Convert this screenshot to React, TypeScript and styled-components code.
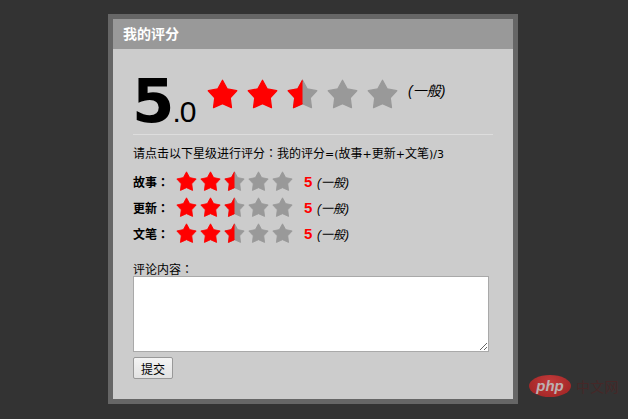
import React from "react";
import styled, { createGlobalStyle } from "styled-components";

const Global = createGlobalStyle`
  html, body { margin: 0; padding: 0; background: #333; height: 100%; overflow: hidden; }
  body { font-family: "Liberation Sans", "Noto Sans CJK SC", sans-serif; font-size: 12px; color: #000; }
`;
const Page = styled.div`
  width: 628px; height: 419px; padding-top: 14px; box-sizing: border-box; position: relative; overflow: hidden;
`;
const Dialog = styled.section`
  width: 400px; height: 380px; margin-left: 108px; border: 5px solid #666; background: #ccc;
`;
const Header = styled.header`
  height: 30px; background: #999; color: #fff; font-weight: 700; font-size: 14px; line-height: 30px; padding-left: 10px;
`;
const Body = styled.div`
  padding: 0 20px; display: flex; flex-direction: column;
`;
const Summary = styled.div`
  height: 86px; box-sizing: border-box; display: flex; align-items: flex-start; border-bottom: 1px solid #ddd;
`;
const Score = styled.div`
  width: 74px; padding-top: 18px; line-height: 68px; white-space: nowrap;
`;
const ScoreMain = styled.span`
  font-family: "DejaVu Sans", sans-serif; font-weight: 700; font-size: 61px; letter-spacing: -2px; margin-left: -1px;
`;
const ScoreFrac = styled.span`
  font-size: 30px; letter-spacing: -1px;
`;
const BigStars = styled.div`
  margin-top: 30px; display: flex; gap: 9px;
`;
const StarIcon = styled.svg<{ $size: number }>`
  width: ${(p) => p.$size}px; height: ${(p) => p.$size}px; display: block; flex: none; overflow: visible;
`;
const BigLabel = styled.em`
  margin: 34px 0 0 10px; line-height: 16px; font-size: 14px;
`;
const Hint = styled.p`
  margin: 0; padding-top: 11px; line-height: 17px; height: 28px; box-sizing: border-box; white-space: nowrap;
`;
const Colon = styled.span`
  font-family: "Noto Sans CJK TC", sans-serif; line-height: 1;
`;
const Sym = styled.span`
  font-family: "DejaVu Sans", sans-serif; font-size: 11px; line-height: 1;
`;
const Rows = styled.div`
  margin-top: 5px; display: flex; flex-direction: column;
`;
const Row = styled.div`
  height: 26px; display: flex; align-items: center;
`;
const RowName = styled.strong`
  width: 43px; flex: none; line-height: 14px; padding-top: 4px;
`;
const RowStars = styled.div`
  display: flex; gap: 3px; width: 124px;
`;
const RowNum = styled.strong`
  color: #f00; font-size: 15px; width: 13px; margin-left: 4px;
`;
const RowLabel = styled.em`
  font-size: 12px;
`;
const CommentLabel = styled.label`
  display: block; margin-top: 17px; line-height: 11px; padding-top: 0;
`;
const Area = styled.textarea`
  display: block; width: 356px; height: 76px; box-sizing: border-box; margin: 0; border: 1px solid #a9a9a9; background: #fff; padding: 2px;
`;
const Submit = styled.button`
  display: block; margin-top: 5px; width: 40px; height: 22px; padding: 0; box-sizing: border-box;
  border: 1px solid #999; border-radius: 2px; background: linear-gradient(#f4f4f4, #e2e2e2);
  font: 12px "Liberation Sans", "Noto Sans CJK SC", sans-serif; color: #000;
`;
const Mark = styled.div`
  position: absolute; left: 529px; top: 375px; display: flex; align-items: center;
`;
const Oval = styled.div`
  width: 42px; height: 22px; border-radius: 50%; background: radial-gradient(ellipse at 50% 30%, #c23a3a, #9c2222);
  color: #bcb0b0; font: italic 700 15px/21px "Liberation Sans", sans-serif; text-align: center;
`;
const MarkCn = styled.span`
  margin-left: 5px; font-size: 14px; letter-spacing: 0.2px; color: #452828; font-family: "Noto Sans CJK SC", sans-serif;
`;

const PTS = "50,4 65,31.5 96,37.8 75,61 79,92.5 50,79.5 21,92.5 25,61 4,37.8 35,31.5";
const COLON = "\uFF1A";

function Star({ size, fill }: { size: number; fill: "on" | "off" | "half" }) {
  const id = React.useId();
  const shape = (color: string, clip?: string) => (
    <polygon points={PTS} fill={color} stroke={color} strokeWidth="4" strokeLinejoin="round" clipPath={clip} />
  );
  if (fill === "half") {
    return (
      <StarIcon $size={size} viewBox="0 0 100 100">
        <defs>
          <clipPath id={id}><rect x="-5" y="-5" width="55" height="110" /></clipPath>
        </defs>
        {shape("#999")}
        {shape("#f00", `url(#${id})`)}
      </StarIcon>
    );
  }
  return (
    <StarIcon $size={size} viewBox="0 0 100 100">
      {shape(fill === "on" ? "#f00" : "#999")}
    </StarIcon>
  );
}

const FILLS = ["on", "on", "half", "off", "off"] as const;
const RATINGS = ["故事", "更新", "文笔"];

export default function App() {
  return (
    <Page>
      <Global />
      <Dialog>
        <Header>我的评分</Header>
        <Body>
          <Summary>
            <Score>
              <ScoreMain>5</ScoreMain>
              <ScoreFrac>.0</ScoreFrac>
            </Score>
            <BigStars>
              {FILLS.map((f, i) => <Star key={i} size={31} fill={f} />)}
            </BigStars>
            <BigLabel>(一般)</BigLabel>
          </Summary>
          <Hint>
            请点击以下星级进行评分<Colon>{COLON}</Colon>我的评分<Sym>=(</Sym>故事<Sym>+</Sym>更新<Sym>+</Sym>文笔<Sym>)/3</Sym>
          </Hint>
          <Rows>
            {RATINGS.map((name) => (
              <Row key={name}>
                <RowName>{name}<Colon>{COLON}</Colon></RowName>
                <RowStars>
                  {FILLS.map((f, i) => <Star key={i} size={21} fill={f} />)}
                </RowStars>
                <RowNum>5</RowNum>
                <RowLabel>(一般)</RowLabel>
              </Row>
            ))}
          </Rows>
          <CommentLabel>评论内容<Colon>{COLON}</Colon></CommentLabel>
          <Area />
          <Submit type="button">提交</Submit>
        </Body>
      </Dialog>
      <Mark>
        <Oval>php</Oval>
        <MarkCn>中文网</MarkCn>
      </Mark>
    </Page>
  );
}
